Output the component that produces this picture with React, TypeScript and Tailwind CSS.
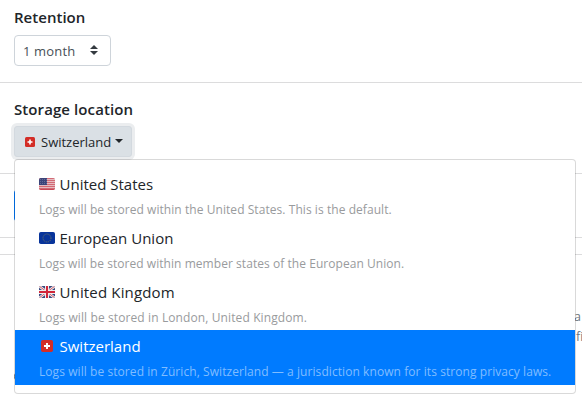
import React from 'react';

function UsFlag() {
  return (
    <svg width="16" height="12" viewBox="0 0 16 12" className="block">
      <defs><clipPath id="us"><rect width="16" height="12" rx="1.8" /></clipPath></defs>
      <g clipPath="url(#us)">
        <rect width="16" height="12" fill="#e9c6ca" />
        {[0, 2, 4, 6, 8, 10].map((y) => <rect key={y} y={y + 0.1} width="16" height="1" fill="#d0606c" />)}
        <rect y="11" width="16" height="1" fill="#c94855" />
        <rect width="8" height="7" fill="#3c4479" />
        {[1, 3, 5].map((y) => [1, 3, 5, 7].map((x) => <rect key={`${x}-${y}`} x={x} y={y} width="0.7" height="0.7" fill="#8a90b5" />))}
      </g>
    </svg>
  );
}

function EuFlag() {
  return (
    <svg width="16" height="12" viewBox="0 0 16 12" className="block">
      <rect width="16" height="12" rx="1.8" fill="#08349b" />
      <circle cx="8" cy="6" r="4" fill="none" stroke="#6c7362" strokeWidth="0.9" strokeDasharray="1.2 0.89" />
    </svg>
  );
}

function UkFlag() {
  return (
    <svg width="16" height="12" viewBox="0 0 16 12" className="block">
      <defs><clipPath id="uk"><rect width="16" height="12" rx="1.8" /></clipPath></defs>
      <g clipPath="url(#uk)">
        <rect width="16" height="12" fill="#39497f" />
        <path d="M0 0L16 12M16 0L0 12" stroke="#eee" strokeWidth="2.6" />
        <path d="M0 0L16 12M16 0L0 12" stroke="#d5495a" strokeWidth="0.9" />
        <path d="M8 0V12M0 6H16" stroke="#eee" strokeWidth="4" />
        <path d="M8 0V12M0 6H16" stroke="#d1263a" strokeWidth="2" />
      </g>
    </svg>
  );
}

function SwissFlag({ size }: { size: number }) {
  return (
    <svg width={size} height={size} viewBox="0 0 12 12" className="block shrink-0">
      <rect width="12" height="12" rx="1.8" fill="#d32d27" />
      <path d="M6 3V9M3 6H9" stroke="#fff" strokeWidth="1.9" />
    </svg>
  );
}

const options = [
  { name: 'United States', note: 'Logs will be stored within the United States. This is the default.', flag: <UsFlag />, tracking: 'tracking-[0px]', noteTracking: 'tracking-[0.06px]' },
  { name: 'European Union', note: 'Logs will be stored within member states of the European Union.', flag: <EuFlag />, tracking: 'tracking-[0px]', noteTracking: 'tracking-[0.05px]' },
  { name: 'United Kingdom', note: 'Logs will be stored in London, United Kingdom.', flag: <UkFlag />, tracking: 'tracking-[0.15px]', noteTracking: 'tracking-[0.11px]' },
  { name: 'Switzerland', note: 'Logs will be stored in Zürich, Switzerland — a jurisdiction known for its strong privacy laws.', flag: <SwissFlag size={12} />, tracking: 'tracking-[0px]', noteTracking: 'tracking-[0.07px]', active: true },
];

function LocationMenu() {
  return (
    <div className="absolute top-full left-0 mt-[2px] h-[235px] w-[562px] rounded-[4px] border border-black/15 bg-white bg-clip-padding pt-[8px]">
      {options.map((o) => (
        <div key={o.name} className={`h-[54px] pl-[24px] last:h-[55px] ${o.active ? 'bg-[#007bff] text-white' : 'text-[#212529]'}`}>
          <div className="flex h-[30px] items-center pt-px">
            <span className="flex w-[20.5px] shrink-0 pt-px"><span className="flex w-4 justify-center">{o.flag}</span></span>
            <span className={`text-[15px] leading-[24px] whitespace-nowrap ${o.tracking}`}>{o.name}</span>
          </div>
          <div className={`mt-[2px] text-[12px] leading-[19px] whitespace-nowrap ${o.noteTracking} ${o.active ? 'text-[#80bdff]' : 'text-[#999b9d]'}`}>{o.note}</div>
        </div>
      ))}
    </div>
  );
}

export default function App() {
  return (
    <div className="h-[401px] w-[582px] overflow-hidden bg-white font-['Open_Sans','Noto_Sans',sans-serif] text-[#212529]">
      <section className="h-[83px] border-b border-[#dcdcdd] px-[14px] pt-[5px]">
        <h2 className="text-[15px] leading-[24px] font-semibold tracking-[0.02px]">Retention</h2>
        <button className="mt-[6px] flex h-[31px] w-[97px] items-center justify-between rounded-[4px] border border-[#ced4da] pr-[12px] pl-[8px] text-[13px] tracking-[0.15px] text-[#495057]">
          <span className="pt-[2px]">1 month</span>
          <svg width="8" height="10" viewBox="0 0 4 5" className="mb-px"><path d="M2 0L0 2h4zm0 5L0 3h4z" fill="#343a40" /></svg>
        </button>
      </section>
      <section className="h-[91px] border-b border-[#dcdcdd] px-[14px] pt-[14px]">
        <h2 className="text-[15px] leading-[24px] font-semibold tracking-[0.09px]">Storage location</h2>
        <div className="relative z-10 mt-[5px] w-[118px]">
          <button className="flex h-[31px] w-[118px] items-center rounded-[3px] border border-[#d3d9df] bg-[#dae0e5] pl-[10px] text-[13px] shadow-[0_0_0_3px_#ebedef]">
            <SwissFlag size={10} />
            <span className="ml-[6px] w-[71px] pt-[2px] text-left whitespace-nowrap">Switzerland</span>
            <span className="mb-[2px] ml-[3px] border-x-[4px] border-t-[4px] border-x-transparent border-t-[#212529]" />
          </button>
          <LocationMenu />
        </div>
      </section>
      <section className="h-[64px] border-b border-[#dcdcdd] px-[14px] pt-[16px]">
        <div className="h-[31px] w-[80px] rounded-[3px] bg-[#007bff]" />
      </section>
      <section className="mt-[16px] border-t border-[#dcdcdd] px-[14px] pt-[52px] text-[12.5px] leading-[20px] text-[#6c757d]">
        <div className="pl-[560px] whitespace-nowrap">a</div>
        <div className="pl-[562px] whitespace-nowrap">fi</div>
        <div className="mt-[23px] h-[13px] w-[13px] rounded-full border border-[#767676]" />
      </section>
    </div>
  );
}
